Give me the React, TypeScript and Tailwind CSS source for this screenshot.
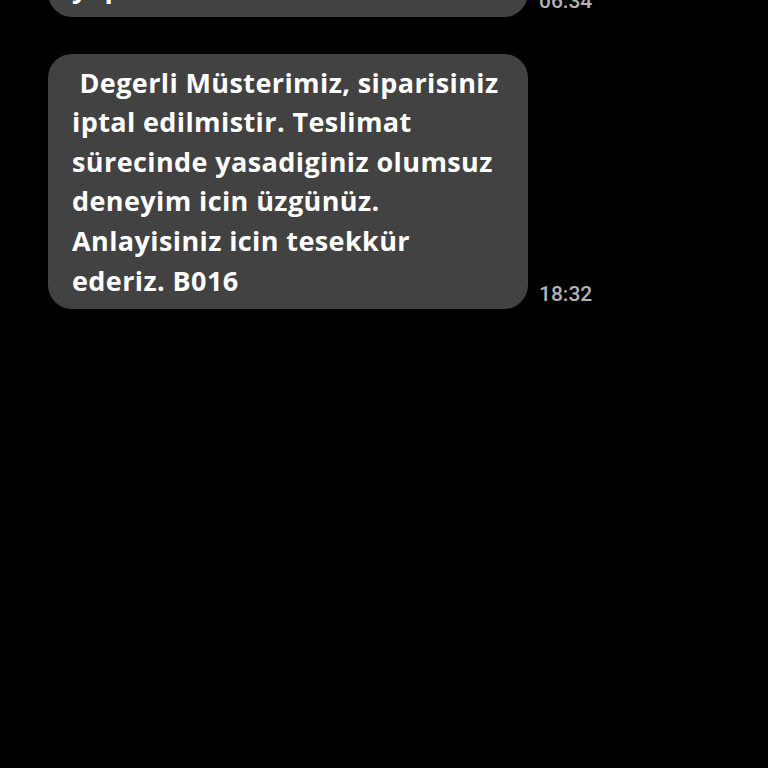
import React from 'react';

const font = { fontFamily: '"Open Sans", Roboto, sans-serif' };

const messages = [
  { lines: ['yapabilirsiniz. B016'], time: '06:34' },
  {
    lines: [
      '\u00a0Degerli Müsterimiz, siparisiniz',
      'iptal edilmistir. Teslimat',
      'sürecinde yasadiginiz olumsuz',
      'deneyim icin üzgünüz.',
      'Anlayisiniz icin tesekkür',
      'ederiz. B016',
    ],
    time: '18:32',
  },
];

const Bubble = ({ lines, time }: { lines: string[]; time: string }) => (
  <div className="flex items-end gap-[11px]">
    <div className="w-[480px] rounded-[24px] bg-[#424242] pl-6 pr-6 pt-[9px] pb-[9px]">
      <p className="text-[27px] font-bold leading-[39.6px] tracking-[0.4px] text-white whitespace-nowrap">
        {lines.map((l, i) => (
          <React.Fragment key={i}>
            {l}
            {i < lines.length - 1 && <br />}
          </React.Fragment>
        ))}
      </p>
    </div>
    <span className="mb-[-1px] text-[21px] font-medium text-[#b3b3b3]" style={{ fontFamily: 'Roboto, sans-serif' }}>{time}</span>
  </div>
);

export default function App() {
  return (
    <div className="h-[768px] w-[768px] overflow-hidden bg-black" style={font}>
      <div className="ml-12 mt-[-41px] flex flex-col gap-[37px]">
        {messages.map((m, i) => (
          <Bubble key={i} lines={m.lines} time={m.time} />
        ))}
      </div>
    </div>
  );
}
